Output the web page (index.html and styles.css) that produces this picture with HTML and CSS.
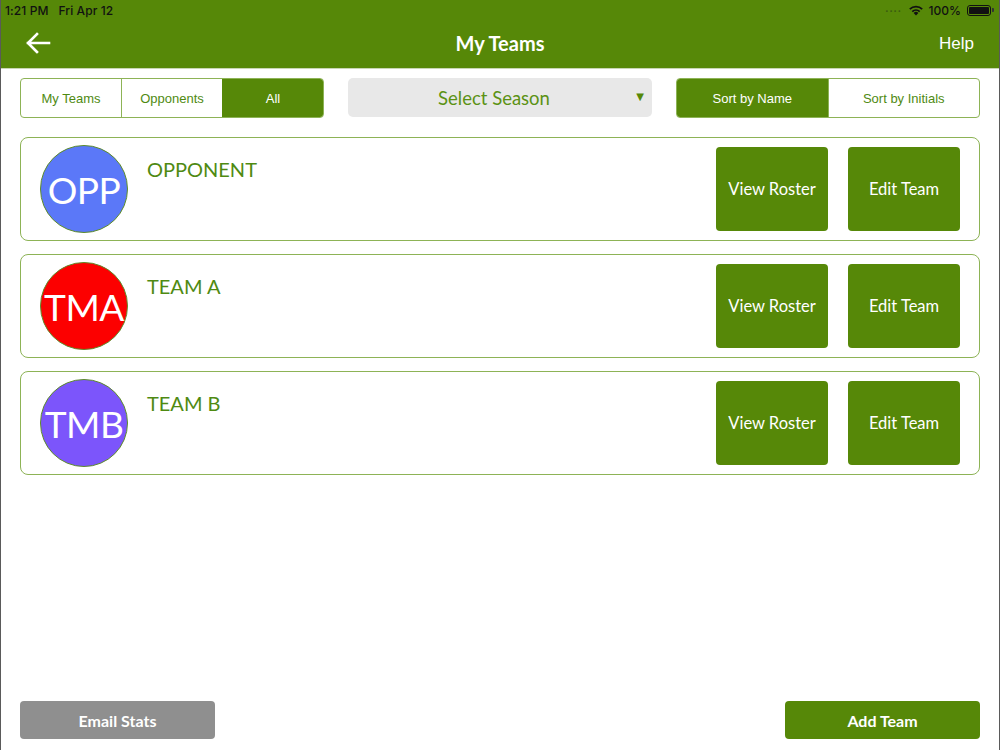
FILE: index.html
```html
<!DOCTYPE html>
<html>
<head>
<meta charset="utf-8">
<link rel="stylesheet" href="styles.css">
</head>
<body>
<div class="screen">
  <header class="header">
    <div class="status">
      <span class="status-time">1:21 PM&nbsp;&nbsp;&nbsp;Fri Apr 12</span>
      <span class="status-right">
        <span class="dots">....</span>
        <svg class="wifi" width="16" height="12" viewBox="0 0 16 12"><path d="M8 11.5 L5.6 9 A3.4 3.4 0 0 1 10.4 9 Z" fill="#111"/><path d="M3.7 7.1 A6.2 6.2 0 0 1 12.3 7.1 L11.1 8.3 A4.5 4.5 0 0 0 4.9 8.3 Z" fill="#111"/><path d="M1.2 4.6 A9.8 9.8 0 0 1 14.8 4.6 L13.6 5.8 A8.1 8.1 0 0 0 2.4 5.8 Z" fill="#111"/></svg>
        <span class="batt-text">100%</span>
        <span class="battery"><span class="battery-fill"></span></span><span class="battery-tip"></span>
      </span>
    </div>
    <div class="nav">
      <svg class="back" width="26" height="22" viewBox="0 0 26 22"><path d="M12 2 L3 11 L12 20 M3 11 H24" fill="none" stroke="#fff" stroke-width="2.6" stroke-linecap="square"/></svg>
      <div class="nav-title">My Teams</div>
      <div class="nav-help">Help</div>
    </div>
  </header>

  <div class="toolbar">
    <div class="seg">
      <div class="seg-item">My Teams</div>
      <div class="seg-item">Opponents</div>
      <div class="seg-item active">All</div>
    </div>
    <div class="select">
      <span class="select-text">Select Season</span>
      <span class="select-arrow">&#9660;</span>
    </div>
    <div class="seg">
      <div class="seg-item active">Sort by Name</div>
      <div class="seg-item">Sort by Initials</div>
    </div>
  </div>

  <div class="list">
    <div class="card">
      <div class="avatar av-blue">OPP</div>
      <div class="team-name">OPPONENT</div>
      <div class="actions">
        <div class="btn">View Roster</div>
        <div class="btn">Edit Team</div>
      </div>
    </div>
    <div class="card">
      <div class="avatar av-red">TMA</div>
      <div class="team-name">TEAM A</div>
      <div class="actions">
        <div class="btn">View Roster</div>
        <div class="btn">Edit Team</div>
      </div>
    </div>
    <div class="card">
      <div class="avatar av-purple">TMB</div>
      <div class="team-name">TEAM B</div>
      <div class="actions">
        <div class="btn">View Roster</div>
        <div class="btn">Edit Team</div>
      </div>
    </div>
  </div>

  <div class="footer">
    <div class="foot-btn gray">Email Stats</div>
    <div class="foot-btn green">Add Team</div>
  </div>
</div>
</body>
</html>
```

FILE: styles.css
```css
* { box-sizing: border-box; }
html, body { margin: 0; padding: 0; background: #fff; }
body { font-family: Lato, "Open Sans", "Liberation Sans", sans-serif; }

.screen {
  width: 1000px;
  height: 750px;
  display: flex;
  flex-direction: column;
  border-left: 1px solid #5a5a5a;
  border-right: 1px solid #5a5a5a;
  overflow: hidden;
}

.header {
  background: #568808;
  height: 69px;
  border-bottom: 1px solid #c9d6b4;
  flex: none;
}

.status {
  height: 20px;
  display: flex;
  align-items: center;
  justify-content: space-between;
  padding: 0 5px 0 4px;
  font-family: Inter, Roboto, "Liberation Sans", sans-serif;
  font-size: 12px;
  font-weight: 500;
  color: #111;
}
.status-time { letter-spacing: 0.1px; }
.status-right { display: flex; align-items: center; gap: 4px; }
.dots { color: #3a5a10; font-size: 12px; letter-spacing: 0.5px; margin-top: -6px; margin-right: 2px; }
.wifi { margin-right: 1px; }
.battery {
  width: 24px; height: 11px;
  border: 1px solid #111;
  border-radius: 3px;
  padding: 1px;
  display: flex;
  margin-left: 2px;
}
.battery-fill { flex: 1; background: #111; border-radius: 1px; }
.battery-tip { width: 2px; height: 4px; background: #333; border-radius: 0 1px 1px 0; margin-left: -3px; }

.nav {
  height: 48px;
  display: flex;
  align-items: center;
  justify-content: space-between;
  padding: 0 25px 0 24px;
  position: relative;
}
.back { margin-top: -2px; }
.nav-title {
  position: absolute;
  left: 0; right: 0;
  top: 11px;
  text-align: center;
  color: #fff;
  font-size: 20px;
  font-weight: 700;
  pointer-events: none;
}
.nav-help {
  color: #fff;
  font-family: "Liberation Sans", Arial, sans-serif;
  font-size: 17px;
}

.toolbar {
  display: grid;
  grid-template-columns: 304px 1fr 304px;
  gap: 24px;
  padding: 0 19px;
  margin-top: 9px;
  height: 40px;
  flex: none;
}
.seg {
  display: flex;
  border: 1px solid #8db356;
  border-radius: 4px;
  overflow: hidden;
}
.seg-item {
  flex: 1;
  display: flex;
  align-items: center;
  justify-content: center;
  font-family: "Liberation Sans", Arial, sans-serif;
  font-size: 13px;
  color: #4f8a12;
  border-left: 1px solid #8db356;
}
.seg-item:first-child { border-left: none; }
.seg-item.active { background: #568808; color: #fff; border-left-color: #568808; }

.select {
  background: #e8e8e8;
  border-radius: 5px;
  display: flex;
  align-items: center;
  justify-content: center;
  position: relative;
  height: 39px;
  padding-right: 12px;
}
.select-text { color: #5b9214; font-size: 18.5px; }
.select-arrow {
  position: absolute;
  right: 8px;
  top: 13px;
  color: #568808;
  font-size: 10px;
  font-family: "DejaVu Sans", sans-serif;
}

.list {
  display: flex;
  flex-direction: column;
  gap: 13px;
  padding: 0 19px;
  margin-top: 19px;
}
.card {
  height: 104px;
  border: 1px solid #8db356;
  border-radius: 8px;
  display: flex;
  align-items: center;
  padding: 0 19px 0 19px;
}
.avatar {
  width: 88px;
  height: 88px;
  border-radius: 50%;
  border: 1px solid #5e8c2a;
  color: #fff;
  display: flex;
  align-items: center;
  justify-content: center;
  font-size: 37px;
  letter-spacing: -0.5px;
  flex: none;
}
.av-blue { background: #5b78f8; }
.av-red { background: #fc0000; }
.av-purple { background: #7c55fb; }

.team-name {
  align-self: flex-start;
  margin-top: 19px;
  margin-left: 19px;
  color: #4f8a12;
  font-size: 20px;
  flex: 1;
}
.actions { display: flex; gap: 20px; }
.btn {
  width: 112px;
  height: 84px;
  background: #568808;
  border-radius: 4px;
  color: #fff;
  display: flex;
  align-items: center;
  justify-content: center;
  font-size: 16.5px;
}

.footer {
  margin-top: auto;
  display: flex;
  justify-content: space-between;
  padding: 0 19px 11px;
}
.foot-btn {
  width: 195px;
  height: 38px;
  border-radius: 4px;
  color: #fff;
  font-weight: 700;
  font-size: 16px;
  display: flex;
  align-items: center;
  justify-content: center;
}
.foot-btn.gray { background: #8f8f8f; }
.foot-btn.green { background: #568808; }
```
